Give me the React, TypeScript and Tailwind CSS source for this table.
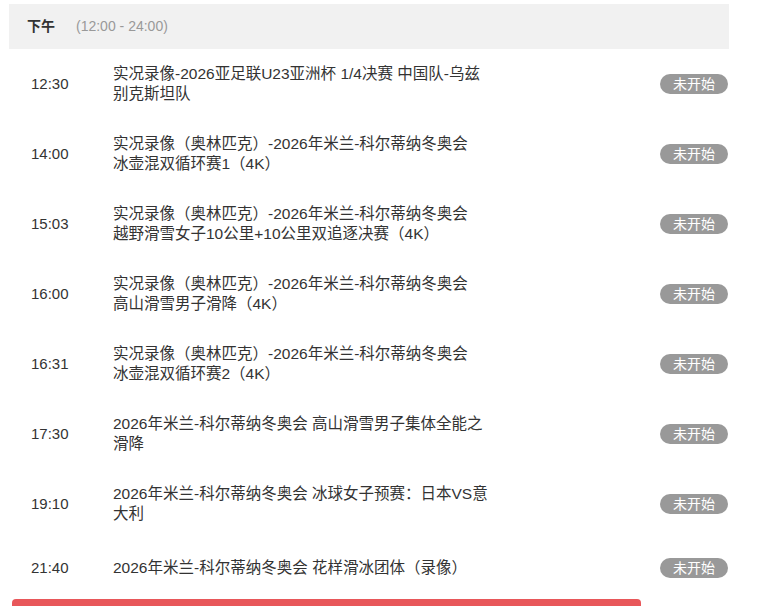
const rows = [
  { time: '12:30', lines: ['实况录像-2026亚足联U23亚洲杯 1/4决赛 中国队-乌兹', '别克斯坦队'] },
  { time: '14:00', lines: ['实况录像（奥林匹克）-2026年米兰-科尔蒂纳冬奥会', '冰壶混双循环赛1（4K）'] },
  { time: '15:03', lines: ['实况录像（奥林匹克）-2026年米兰-科尔蒂纳冬奥会', '越野滑雪女子10公里+10公里双追逐决赛（4K）'] },
  { time: '16:00', lines: ['实况录像（奥林匹克）-2026年米兰-科尔蒂纳冬奥会', '高山滑雪男子滑降（4K）'] },
  { time: '16:31', lines: ['实况录像（奥林匹克）-2026年米兰-科尔蒂纳冬奥会', '冰壶混双循环赛2（4K）'] },
  { time: '17:30', lines: ['2026年米兰-科尔蒂纳冬奥会 高山滑雪男子集体全能之', '滑降'] },
  { time: '19:10', lines: ['2026年米兰-科尔蒂纳冬奥会 冰球女子预赛：日本VS意', '大利'] },
  { time: '21:40', lines: ['2026年米兰-科尔蒂纳冬奥会 花样滑冰团体（录像）'] },
]

const App = () => {
  return (
    <main
      className="h-[606px] overflow-hidden bg-white text-[#333]"
      style={{ fontFamily: '"Liberation Sans", Arial, "Noto Sans CJK SC", sans-serif' }}
    >
      <div className="ml-[9px] w-[720px] pt-[4px]">
        <header className="flex h-[45px] items-center bg-[#f1f1f1] pl-[18px] text-[14px]">
          <span className="font-bold text-[#333]">下午</span>
          <span className="ml-[21px] text-[#999]">(12:00 - 24:00)</span>
        </header>
        <ul>
          {rows.map((row) => (
            <li key={row.time} className="flex min-h-[58px] items-center py-[15px]">
              <div className="w-[104px] pl-[22px] text-[15px] leading-[20px]">{row.time}</div>
              <div className="flex-1 whitespace-nowrap text-[15.5px] leading-[20px]">
                {row.lines.map((line, i) => (
                  <div key={i}>{line}</div>
                ))}
              </div>
              <span className="mr-[1px] flex h-[20px] w-[68px] items-center justify-center rounded-full bg-[#999] text-[14px] text-white">
                未开始
              </span>
            </li>
          ))}
        </ul>
        <div className="ml-[3px] mt-[2px] h-[40px] w-[629px] rounded-[4px] bg-[#e8575a]" />
      </div>
    </main>
  )
}

export default App
